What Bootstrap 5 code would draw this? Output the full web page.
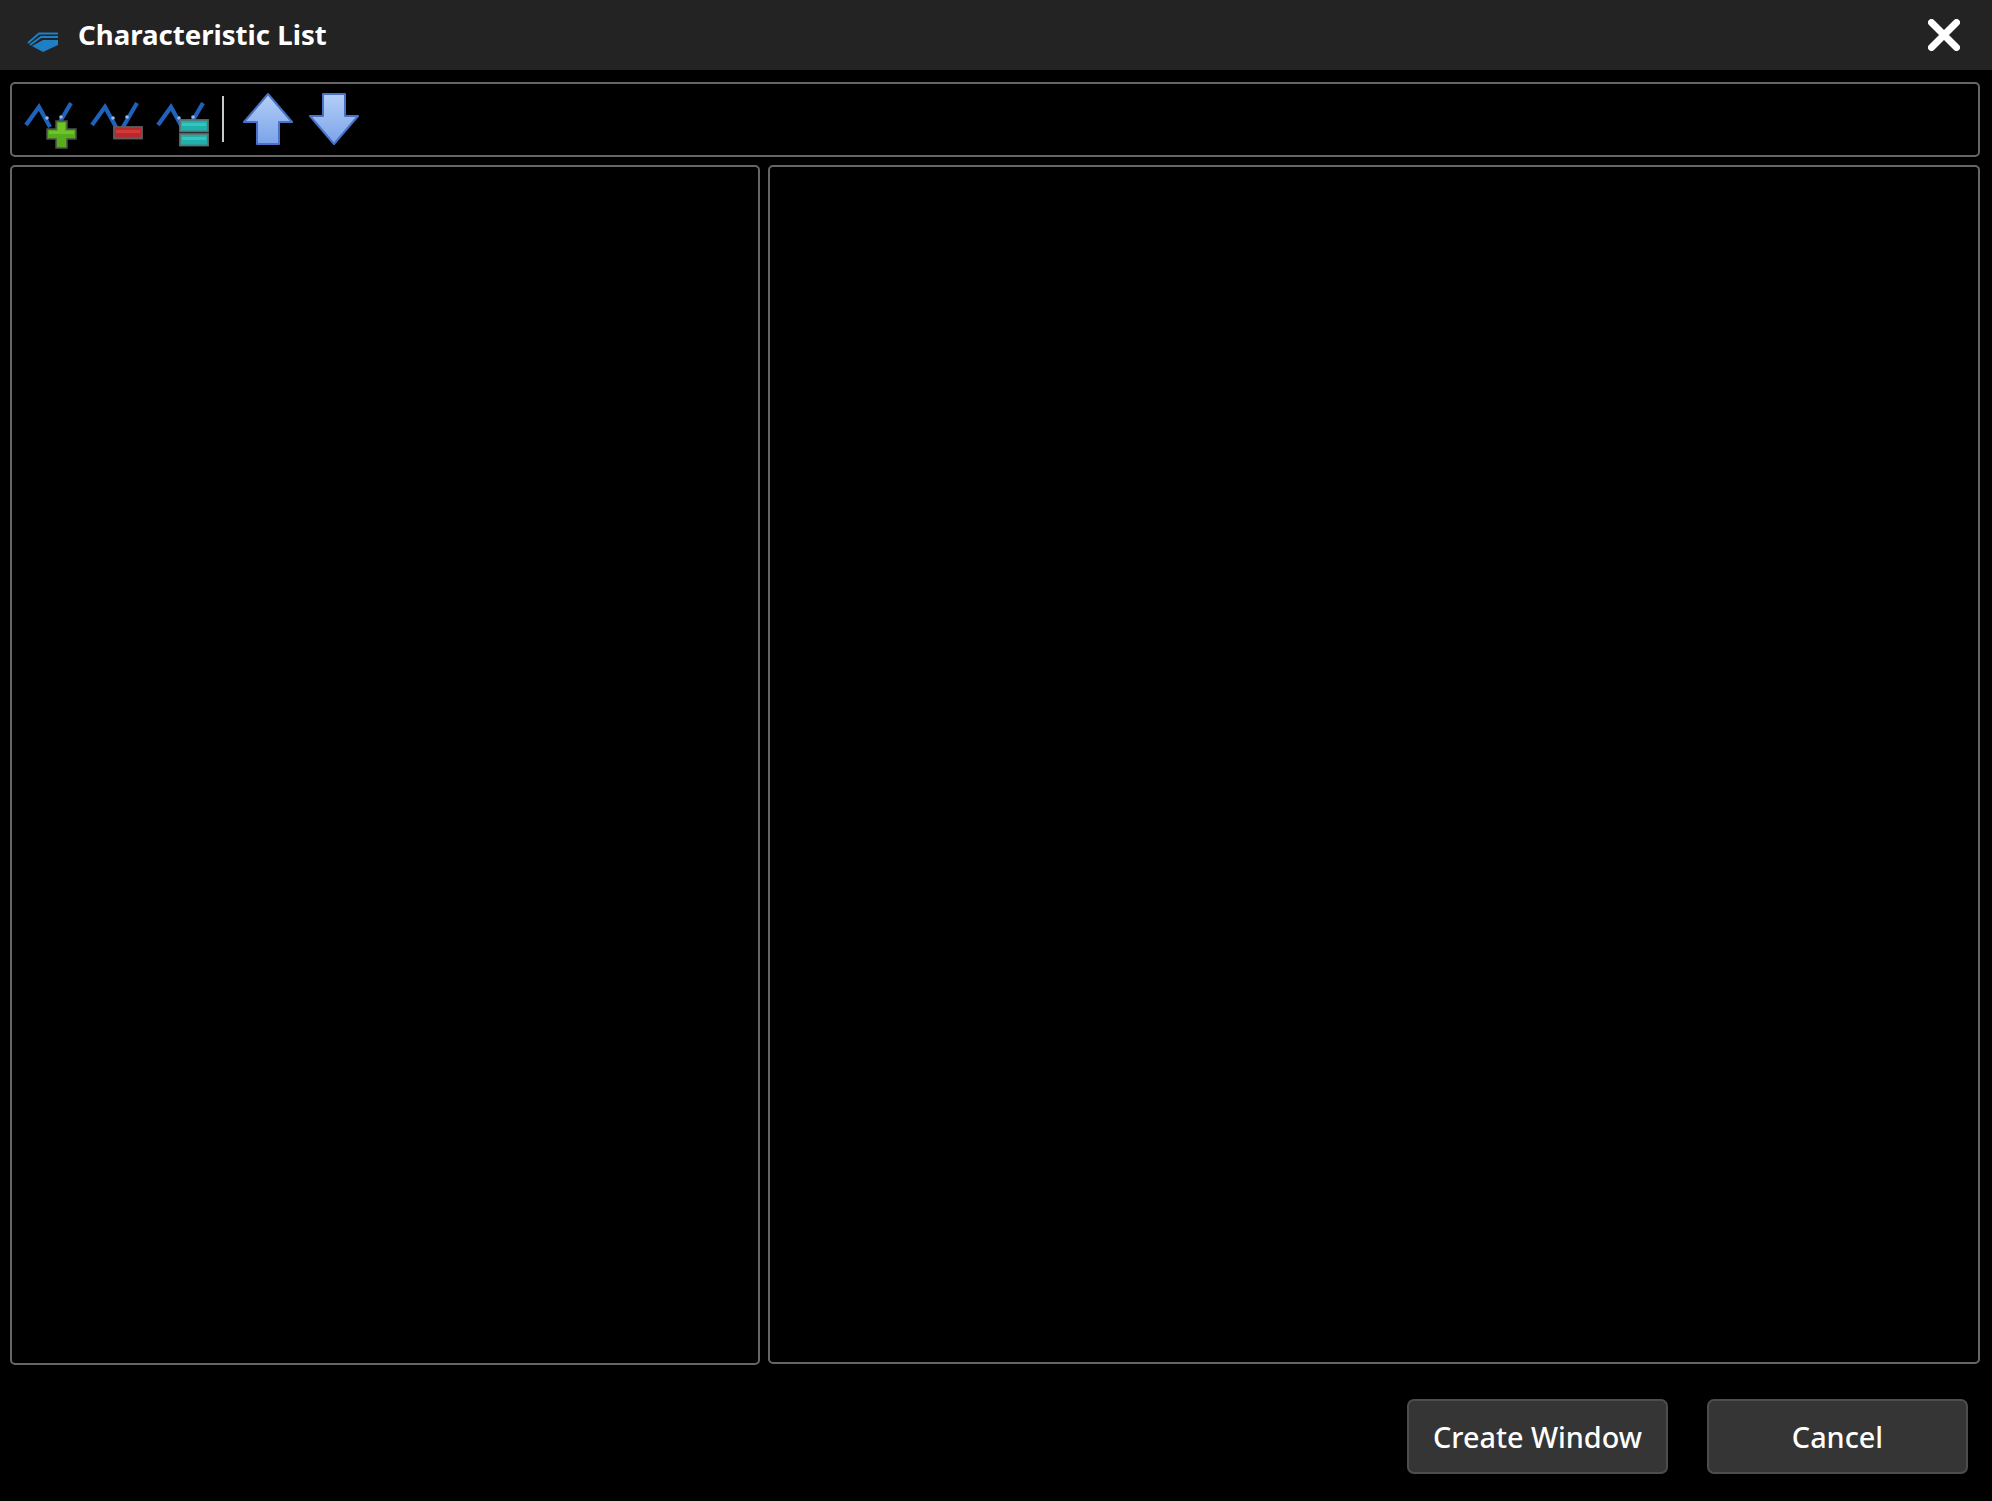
<!DOCTYPE html>
<html lang="en">
<head>
    <meta charset="UTF-8">
    <meta name="viewport" content="width=device-width, initial-scale=1.0">
    <title>Characteristic List</title>
    <link href="https://cdn.jsdelivr.net/npm/bootstrap@5.3.0/dist/css/bootstrap.min.css" rel="stylesheet">
    <script src="https://cdn.jsdelivr.net/npm/bootstrap@5.3.0/dist/js/bootstrap.bundle.min.js"></script>
    <style>
        html, body { height: 100%; background: #000; }
        body { font-family: "Noto Sans", "Open Sans", sans-serif; color: #fff; }
        .titlebar { height: 70px; background: #232323; padding-left: 26px; padding-right: 32px; }
        .titlebar .logo { margin-top: 14px; }
        .titlebar .title { font-size: 27.6px; font-weight: 700; margin-left: 20px; line-height: 1; color: #fff; }
        .close-x { background: none; border: 0; padding: 0; line-height: 0; }
        .panel { border: 2px solid #666; border-radius: 5px; background: #000; }
        .toolbar { height: 75px; margin: 12px 12px 8px 10px; padding: 5px 0 0 8px; }
        .toolbar svg { flex: none; display: block; filter: blur(.45px); }
        .sep { width: 2px; height: 46px; margin: 7px 14px 0 4px; background: #c9c9c9; }
        .arrow-gap { margin-right: 5px; }
        .panels { height: 1200px; margin: 0 12px 0 10px; gap: 8px; }
        .panel-left { width: 750px; flex: none; }
        .panel-right { height: 1199px; }
        .footer-btns { margin-top: 34px; padding-right: 24px; gap: 39px; }
        .btn-dark-win { width: 261px; height: 75px; background: #353535; border: 2px solid #4d4d4d; border-radius: 7px; color: #fff; font-size: 28.8px; font-weight: 500; padding: 1px 0 0; }
    </style>
</head>
<body>
    <!-- barra de titulo -->
    <div class="titlebar d-flex align-items-center justify-content-between">
        <div class="d-flex align-items-center">
            <svg class="logo" width="32" height="20" viewBox="0 0 32 20" aria-hidden="true">
                <path d="M2 11 L13 1.5 H32" fill="none" stroke="#1f7fc4" stroke-width="2"/>
                <path d="M4 13 L15 5 H32" fill="none" stroke="#1f7fc4" stroke-width="2"/>
                <path d="M6 14 L17 8 H32 V13 L17 20 Z" fill="#1f7fc4"/>
            </svg>
            <span class="title">Characteristic List</span>
        </div>
        <button class="close-x" type="button" aria-label="Close">
            <svg width="32" height="32" viewBox="0 0 32 32">
                <path d="M3.5 3.5 L28.5 28.5 M28.5 3.5 L3.5 28.5" stroke="#fff" stroke-width="7" stroke-linecap="round"/>
            </svg>
        </button>
    </div>

    <!-- toolbar -->
    <div class="panel toolbar d-flex align-items-start">
        <svg width="66" height="60" viewBox="0 0 66 60">
            <path d="M6 36 L19 18 L30 38 M37 38 L51 14" fill="none" stroke="#1f62bc" stroke-width="4.2"/>
            <circle cx="27" cy="29" r="1.8" fill="#9dbbe0"/><circle cx="41" cy="28" r="1.8" fill="#9dbbe0"/>
            <path d="M36 32 H47 V40 H56 V50 H47 V59 H36 V50 H27 V40 H36 Z" fill="#56ac1c" stroke="#4e4e4e" stroke-width="1.5"/>
            <path d="M38 34 H45 V42 H54 V45 H29 V42 H38 Z" fill="#6cc426"/>
        </svg>
        <svg width="66" height="60" viewBox="0 0 66 60">
            <path d="M6 36 L19 18 L30 38 M37 38 L51 14" fill="none" stroke="#1f62bc" stroke-width="4.2"/>
            <circle cx="27" cy="29" r="1.8" fill="#9dbbe0"/><circle cx="41" cy="28" r="1.8" fill="#9dbbe0"/>
            <rect x="28" y="38" width="28" height="11.5" fill="#bb282c" stroke="#5e5e5e" stroke-width="1.8"/>
            <rect x="30" y="41" width="24" height="3" fill="#cf3a3d"/>
        </svg>
        <svg width="66" height="60" viewBox="0 0 66 60">
            <path d="M6 36 L19 18 L30 38 M37 38 L51 14" fill="none" stroke="#1f62bc" stroke-width="4.2"/>
            <circle cx="27" cy="29" r="1.8" fill="#9dbbe0"/><circle cx="41" cy="28" r="1.8" fill="#9dbbe0"/>
            <rect x="28" y="31" width="28" height="11.5" fill="#1fb0ac" stroke="#5e7070" stroke-width="1.8"/>
            <rect x="30" y="34" width="24" height="3" fill="#33c6c0"/>
            <rect x="28" y="45" width="28" height="11.5" fill="#1fb0ac" stroke="#5e7070" stroke-width="1.8"/>
            <rect x="30" y="48" width="24" height="3" fill="#33c6c0"/>
        </svg>
        <div class="sep"></div>
        <svg class="arrow-gap" width="60" height="60" viewBox="0 0 60 60">
            <defs>
                <linearGradient id="gradUp" x1="0" y1="0" x2="0" y2="1"><stop offset="0" stop-color="#b4cff7"/><stop offset="1" stop-color="#7ba3ea"/></linearGradient>
                <linearGradient id="gradDown" x1="0" y1="0" x2="0" y2="1"><stop offset="0" stop-color="#b4cff7"/><stop offset="1" stop-color="#7ba3ea"/></linearGradient>
            </defs>
            <path d="M30 5 L54 33 H41 V55 H19 V33 H6 Z" fill="url(#gradUp)" stroke="#4a72c6" stroke-width="2" stroke-linejoin="round"/>
        </svg>
        <svg width="60" height="60" viewBox="0 0 60 60">
            <path d="M20 5 H42 V27 H55 L31 55 L7 27 H20 Z" fill="url(#gradDown)" stroke="#4a72c6" stroke-width="2" stroke-linejoin="round"/>
        </svg>
    </div>

    <!-- paneles -->
    <div class="panels d-flex">
        <div class="panel panel-left"></div>
        <div class="panel panel-right flex-grow-1"></div>
    </div>

    <div class="footer-btns d-flex justify-content-end">
        <button class="btn btn-dark-win" type="button">Create Window</button>
        <button class="btn btn-dark-win" type="button">Cancel</button>
    </div>
</body>
</html>
